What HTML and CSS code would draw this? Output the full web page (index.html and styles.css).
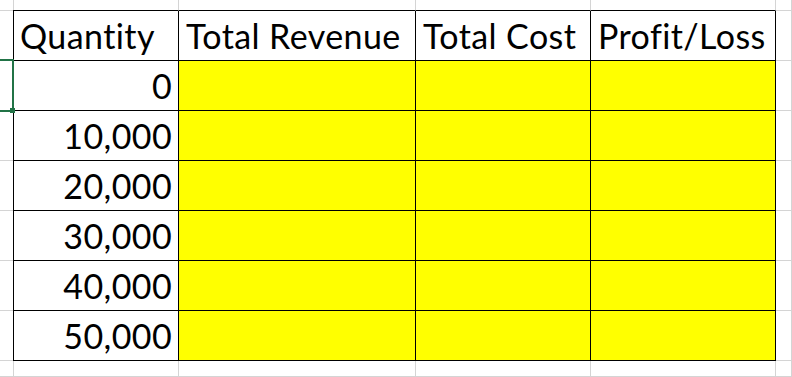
FILE: index.html
```html
<!DOCTYPE html>
<html>
<head>
<meta charset="utf-8">
<link rel="stylesheet" href="styles.css">
</head>
<body>
<div class="sheet">
  <div class="c"></div><div class="c top"></div><div class="c top"></div><div class="c top"></div><div class="c top"></div><div class="c"></div>

  <div class="c edge"></div><div class="c t h">Quantity</div><div class="c t h">Total Revenue</div><div class="c t h">Total Cost</div><div class="c t h">Profit/Loss</div><div class="c"></div>

  <div class="c edge"></div><div class="c t n">0</div><div class="c t y"></div><div class="c t y"></div><div class="c t y"></div><div class="c"></div>
  <div class="c edge"></div><div class="c t n">10,000</div><div class="c t y"></div><div class="c t y"></div><div class="c t y"></div><div class="c"></div>
  <div class="c edge"></div><div class="c t n">20,000</div><div class="c t y"></div><div class="c t y"></div><div class="c t y"></div><div class="c"></div>
  <div class="c edge"></div><div class="c t n">30,000</div><div class="c t y"></div><div class="c t y"></div><div class="c t y"></div><div class="c"></div>
  <div class="c edge"></div><div class="c t n">40,000</div><div class="c t y"></div><div class="c t y"></div><div class="c t y"></div><div class="c"></div>
  <div class="c edge"></div><div class="c t n">50,000</div><div class="c t y"></div><div class="c t y"></div><div class="c t y"></div><div class="c"></div>

  <div class="c"></div><div class="c"></div><div class="c"></div><div class="c"></div><div class="c"></div><div class="c"></div>

  <div class="sel"></div>
  <div class="handle"></div>
</div>
</body>
</html>
```

FILE: styles.css
```css
html, body {
  margin: 0;
  padding: 0;
  background: #ffffff;
}

.sheet {
  position: relative;
  width: 792px;
  height: 377px;
  overflow: hidden;
  display: grid;
  grid-template-columns: 13px 166px 237px 175px 185px 1fr;
  grid-template-rows: 11px repeat(7, 50px) 1fr;
  font-family: Lato, "Liberation Sans", sans-serif;
  font-size: 34px;
  line-height: 1;
  letter-spacing: 0.4px;
  font-variant-ligatures: none;
  color: #000000;
}

.c {
  box-sizing: border-box;
  border-right: 1px solid #d4d4d4;
  border-bottom: 1px solid #d4d4d4;
  display: flex;
  align-items: flex-end;
  padding: 0 6px 7px 7px;
  white-space: nowrap;
}

.top {
  border-bottom-color: #000000;
}

.edge {
  border-right-color: #000000;
}

.t {
  border-right-color: #000000;
  border-bottom-color: #000000;
}

.h {
  justify-content: flex-start;
}

.n {
  justify-content: flex-end;
}

.y {
  background: #ffff00;
}

.sel {
  position: absolute;
  left: -10px;
  top: 59px;
  width: 24px;
  height: 53px;
  box-sizing: border-box;
  border: 2px solid #217346;
}

.handle {
  position: absolute;
  left: 10px;
  top: 108px;
  width: 5px;
  height: 5px;
  background: #217346;
}
```
